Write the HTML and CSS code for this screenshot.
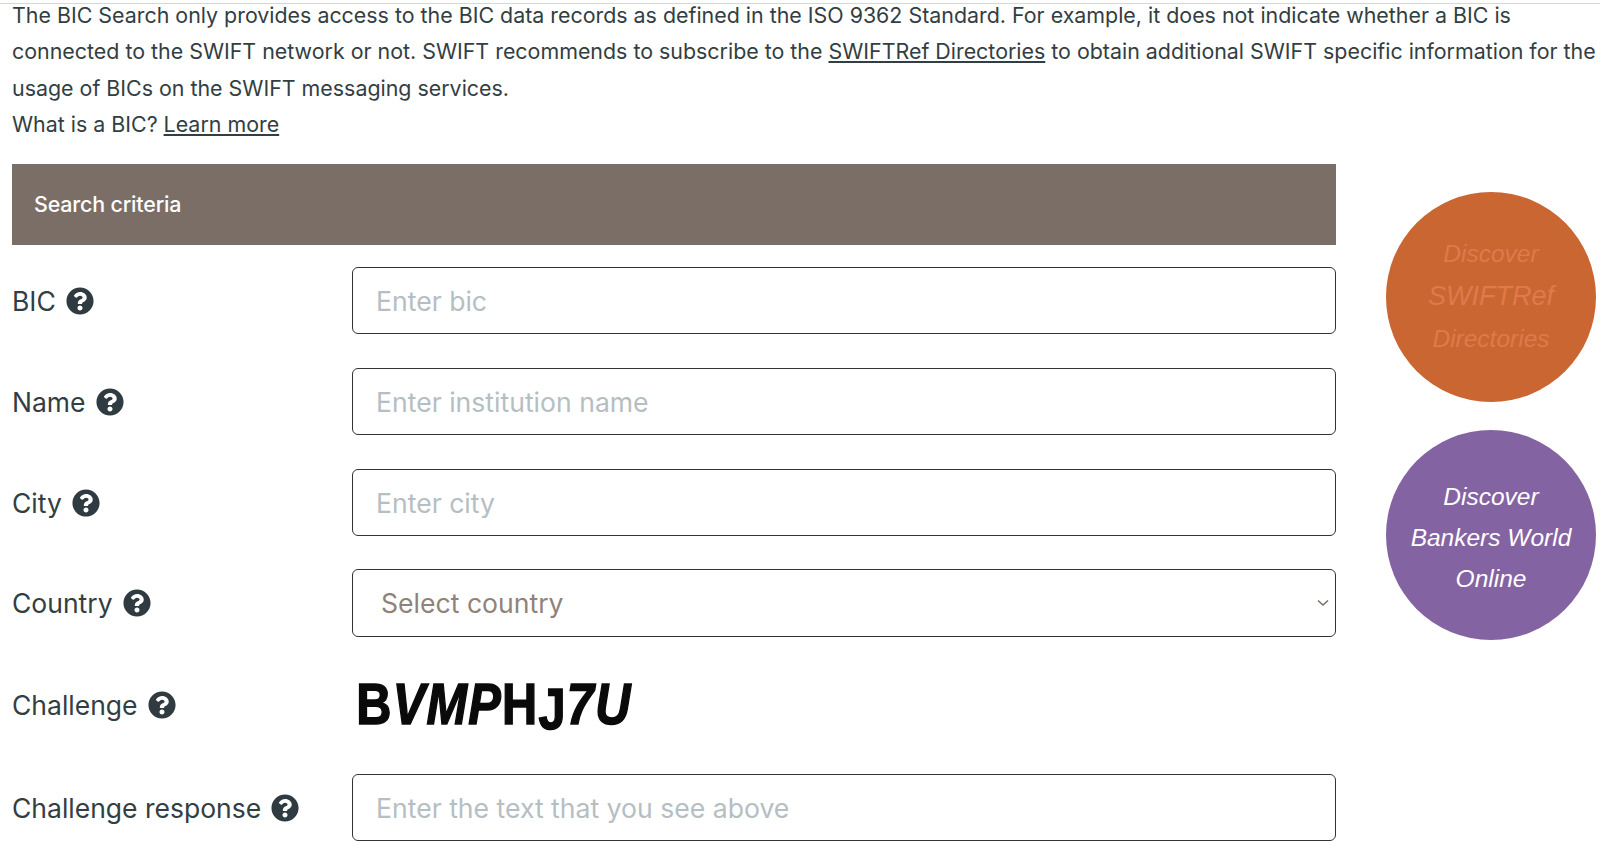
FILE: index.html
```html
<!DOCTYPE html>
<html lang="en">

<head>
  <meta charset="UTF-8">
  <meta name="viewport" content="width=device-width, initial-scale=1.0">
  <title>BIC Search</title>
  <link rel="stylesheet" href="styles.css">
</head>

<body>
  <svg class="sprite" xmlns="http://www.w3.org/2000/svg">
    <symbol id="helpIcon" viewBox="0 0 512 512">
      <path fill="currentColor" d="M504 256c0 136.997-111.043 248-248 248S8 392.997 8 256C8 119.083 119.043 8 256 8s248 111.083 248 248zM262.655 90c-54.497 0-89.255 22.957-116.549 63.758-3.536 5.286-2.353 12.415 2.715 16.258l34.699 26.31c5.205 3.947 12.621 3.008 16.665-2.122 17.864-22.658 30.113-35.797 57.303-35.797 20.429 0 45.698 13.148 45.698 32.958 0 14.976-12.363 22.667-32.534 33.976C247.128 238.528 216 254.941 216 296v4c0 6.627 5.373 12 12 12h56c6.627 0 12-5.373 12-12v-1.333c0-28.462 83.186-29.647 83.186-106.667 0-58.002-60.165-102-116.531-102zM256 338c-25.365 0-46 20.635-46 46 0 25.364 20.635 46 46 46s46-20.636 46-46c0-25.365-20.635-46-46-46z" />
    </symbol>
  </svg>

  <div class="intro">
    <p>The BIC Search only provides access to the BIC data records as defined in the ISO 9362 Standard. For example, it does not indicate whether a BIC is connected to the SWIFT network or not. SWIFT recommends to subscribe to the <a href="#">SWIFTRef Directories</a> to obtain additional SWIFT specific information for the usage of BICs on the SWIFT messaging services.</p>
    <p>What is a BIC? <a href="#">Learn more</a></p>
  </div>

  <div class="content">
    <form class="searchForm" action="javascript:void(0);">
      <h2 class="formTitle">Search criteria</h2>

      <div class="row">
        <label class="rowLabel" for="bic">BIC <svg class="help"><use href="#helpIcon"></use></svg></label>
        <input class="field" type="text" id="bic" placeholder="Enter bic">
      </div>

      <div class="row">
        <label class="rowLabel" for="name">Name <svg class="help"><use href="#helpIcon"></use></svg></label>
        <input class="field" type="text" id="name" placeholder="Enter institution name">
      </div>

      <div class="row">
        <label class="rowLabel" for="city">City <svg class="help"><use href="#helpIcon"></use></svg></label>
        <input class="field" type="text" id="city" placeholder="Enter city">
      </div>

      <div class="row countryRow">
        <label class="rowLabel" for="country">Country <svg class="help"><use href="#helpIcon"></use></svg></label>
        <div class="selectBox">
          <select class="field countrySelect" id="country">
            <option>Select country</option>
          </select>
          <svg class="chevron" viewBox="0 0 12 8"><path d="M1 1.5l5 4.5 5-4.5" /></svg>
        </div>
      </div>

      <div class="row captchaRow">
        <span class="rowLabel">Challenge <svg class="help"><use href="#helpIcon"></use></svg></span>
        <div class="captcha"><span class="upright">B</span>VMP<span class="upright">H</span><span class="upright dropped">J</span>7U</div>
      </div>

      <div class="row">
        <label class="rowLabel" for="response">Challenge response <svg class="help"><use href="#helpIcon"></use></svg></label>
        <input class="field" type="text" id="response" placeholder="Enter the text that you see above">
      </div>
    </form>

    <aside class="promos">
      <a class="promo promoOrange" href="#">
        <span>Discover</span>
        <span class="promoBig">SWIFTRef</span>
        <span>Directories</span>
      </a>
      <a class="promo promoPurple" href="#">
        <span>Discover</span>
        <span>Bankers World</span>
        <span>Online</span>
      </a>
    </aside>
  </div>
</body>

</html>
```

FILE: styles.css
```css
html {
  height: 856px;
  overflow: hidden;
}

body {
  margin: 0;
  padding: 0 4px 0 12px;
  box-shadow: inset 0 3px 0 #fff, inset 0 4px 0 #d3d6e6;
  font-family: Inter, "Liberation Sans", sans-serif;
  color: #333e42;
  background-color: #fff;
}

.sprite {
  display: none;
}

.intro {
  margin-top: -3px;
  margin-bottom: 21px;
  margin-right: -4px;
  font-size: 21.4px;
  line-height: 36.4px;
}

.intro p {
  margin: 0;
}

.intro a {
  color: #333e42;
  text-decoration: underline;
}

.content {
  display: flex;
  justify-content: space-between;
}

.searchForm {
  width: 1324px;
}

.formTitle {
  margin: 0 0 22px;
  padding: 0 22px;
  height: 81px;
  line-height: 81px;
  font-size: 21.4px;
  font-weight: 500;
  letter-spacing: -0.15px;
  color: #fff;
  background-color: #7b6e66;
}

.row {
  display: flex;
  align-items: center;
  height: 67px;
  margin-bottom: 34px;
}

.countryRow {
  height: 68px;
  margin-top: -1px;
}

.captchaRow {
  height: 69px;
}

.captchaRow .rowLabel {
  padding: 0 0 1px;
}

.rowLabel {
  display: flex;
  align-items: center;
  gap: 10px;
  width: 340px;
  padding-top: 1px;
  font-size: 26.5px;
}

.help {
  width: 28px;
  height: 28px;
  color: #2f3b40;
}

.field {
  flex: 1;
  min-width: 0;
  height: 100%;
  box-sizing: border-box;
  padding: 1px 23px 0;
  border: 1px solid #333;
  border-radius: 6px;
  font-family: inherit;
  font-size: 26.6px;
  color: #8f8379;
  background-color: #fff;
}

.field::placeholder {
  color: #b5bec3;
  opacity: 1;
}

.selectBox {
  position: relative;
  display: flex;
  flex: 1;
  height: 100%;
}

.countrySelect {
  appearance: none;
  padding: 1px 28px 0;
}

.chevron {
  position: absolute;
  top: 30px;
  right: 7px;
  width: 12px;
  height: 8px;
  fill: none;
  stroke: #7b6e66;
  stroke-width: 1.6;
}

.captcha {
  padding-left: 5px;
  padding-bottom: 4px;
  font-family: "Liberation Sans", sans-serif;
  font-size: 58px;
  font-weight: 700;
  font-style: italic;
  line-height: 65px;
  letter-spacing: 1.5px;
  color: #0a0a0a;
  -webkit-text-stroke: 1.5px #0a0a0a;
  transform: scaleX(0.84);
  transform-origin: left center;
}

.upright {
  font-style: normal;
}

.dropped {
  display: inline-block;
  transform: translateY(5px);
}

.promos {
  display: flex;
  flex-direction: column;
  gap: 28px;
  padding-top: 28px;
}

.promo {
  display: flex;
  flex-direction: column;
  align-items: center;
  justify-content: center;
  width: 210px;
  height: 210px;
  box-sizing: border-box;
  border-radius: 50%;
  font-family: "Liberation Sans", sans-serif;
  font-size: 24.5px;
  font-style: italic;
  line-height: 41px;
  text-decoration: none;
}

.promoOrange {
  padding-bottom: 1px;
  color: #e0794b;
  background-color: #c96632;
}

.promoBig {
  font-size: 27px;
  line-height: 44px;
}

.promoPurple {
  padding-top: 6px;
  color: #fff;
  background-color: #8463a3;
}
```
